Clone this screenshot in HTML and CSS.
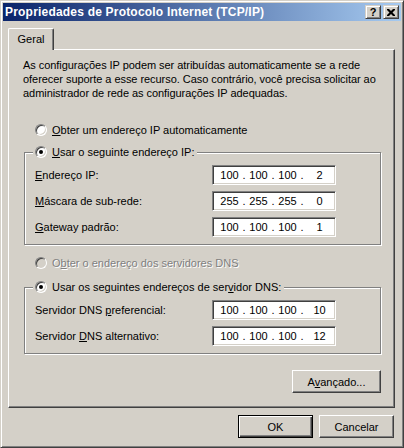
FILE: index.html
```html
<!DOCTYPE html>
<html lang="pt-BR">
<head>
  <meta charset="UTF-8" />
  <title>Propriedades de Protocolo Internet (TCP/IP)</title>
  <link rel="stylesheet" href="styles.css">
</head>
<body>
  <div class="window">
    <div class="titlebar">
      <span class="title">Propriedades de Protocolo Internet (TCP/IP)</span>
      <div class="caption-buttons">
        <button class="cap-btn help">?</button>
        <button class="cap-btn close" aria-label="Fechar">
          <svg width="8" height="7" viewBox="0 0 8 7"><path d="M0 0h2l2 2 2-2h2v1L5.5 3.5 8 6v1H6L4 5 2 7H0V6l2.5-2.5L0 1z" fill="#000"/></svg>
        </button>
      </div>
    </div>

    <div class="tabs">
      <div class="tab active">Geral</div>
    </div>

    <div class="tab-panel">
      <p class="intro">As configurações IP podem ser atribuídas automaticamente se a rede<br>oferecer suporte a esse recurso. Caso contrário, você precisa solicitar ao<br>administrador de rede as configurações IP adequadas.</p>

      <label class="radio-row auto-ip">
        <span class="radio"></span>
        <span><u>O</u>bter um endereço IP automaticamente</span>
      </label>

      <!-- IP manual -->
      <div class="group group-ip">
        <label class="radio-row legend">
          <span class="radio checked"></span>
          <span><u>U</u>sar o seguinte endereço IP:</span>
        </label>
        <div class="field-row">
          <span class="field-label"><u>E</u>ndereço IP:</span>
          <div class="ip-field"><span>100</span><i>.</i><span>100</span><i>.</i><span>100</span><i>.</i><span class="last">2</span></div>
        </div>
        <div class="field-row">
          <span class="field-label"><u>M</u>áscara de sub-rede:</span>
          <div class="ip-field"><span>255</span><i>.</i><span>255</span><i>.</i><span>255</span><i>.</i><span class="last">0</span></div>
        </div>
        <div class="field-row">
          <span class="field-label"><u>G</u>ateway padrão:</span>
          <div class="ip-field"><span>100</span><i>.</i><span>100</span><i>.</i><span>100</span><i>.</i><span class="last">1</span></div>
        </div>
      </div>

      <label class="radio-row auto-dns disabled">
        <span class="radio"></span>
        <span>O<u>b</u>ter o endereço dos servidores DNS</span>
      </label>

      <!-- DNS manual -->
      <div class="group group-dns">
        <label class="radio-row legend">
          <span class="radio checked"></span>
          <span>Usar os seguintes endereços de ser<u>v</u>idor DNS:</span>
        </label>
        <div class="field-row">
          <span class="field-label">Servidor DNS <u>p</u>referencial:</span>
          <div class="ip-field"><span>100</span><i>.</i><span>100</span><i>.</i><span>100</span><i>.</i><span class="last">10</span></div>
        </div>
        <div class="field-row">
          <span class="field-label">Servidor <u>D</u>NS alternativo:</span>
          <div class="ip-field"><span>100</span><i>.</i><span>100</span><i>.</i><span>100</span><i>.</i><span class="last">12</span></div>
        </div>
      </div>

      <div class="panel-actions">
        <button class="btn">A<u>v</u>ançado...</button>
      </div>
    </div>

    <div class="dialog-actions">
      <button class="btn default">OK</button>
      <button class="btn">Cancelar</button>
    </div>
  </div>
</body>
</html>
```

FILE: styles.css
```css
:root {
  --face: #d4d0c8;
  --shadow: #808080;
  --dark: #404040;
  --light: #fff;
}
* { box-sizing: border-box; }
body {
  margin: 0;
  background: var(--face);
  font-family: "Liberation Sans", Arial, sans-serif;
  font-size: 11px;
  color: #000;
}
u { text-decoration: underline; text-underline-offset: 1px; }

.window {
  width: 404px;
  height: 448px;
  background: var(--face);
  border: 1px solid;
  border-color: var(--face) var(--dark) var(--dark) var(--face);
  box-shadow: inset 1px 1px var(--light), inset -1px -1px var(--shadow);
  padding: 2px;
  display: flex;
  flex-direction: column;
}

/* title bar */
.titlebar {
  height: 18px;
  background: linear-gradient(to right, #0a246a, #a6caf0);
  display: flex;
  align-items: center;
  justify-content: space-between;
  padding: 0 2px 0 2px;
}
.title {
  color: #fff;
  font-weight: 700;
  font-size: 12px;
  letter-spacing: 0.2px;
}
.caption-buttons {
  display: flex;
  gap: 2px;
}
.cap-btn {
  width: 16px;
  height: 14px;
  padding: 0;
  background: var(--face);
  border: 1px solid;
  border-color: var(--face) var(--dark) var(--dark) var(--face);
  box-shadow: inset 1px 1px var(--light), inset -1px -1px var(--shadow);
  font: 700 11px "Liberation Sans", Arial, sans-serif;
  color: #000;
  display: flex;
  align-items: center;
  justify-content: center;
  line-height: 1;
}
.cap-btn svg { display: block; }

/* tabs */
.tabs {
  display: flex;
  height: 21px;
  margin: 7px 6px 0 5px;
}
.tab {
  position: relative;
  z-index: 1;
  width: 46px;
  height: 22px;
  padding-top: 4px;
  text-align: center;
  background: var(--face);
  border-top: 1px solid var(--light);
  border-left: 1px solid var(--light);
  border-right: 1px solid var(--dark);
  border-radius: 2px 2px 0 0;
  box-shadow: inset -1px 0 var(--shadow);
}

.tab-panel {
  height: 359px;
  margin: 0 6px 0 5px;
  padding: 8px 14px 0 14px;
  border: 1px solid;
  border-color: var(--light) var(--dark) var(--dark) var(--light);
  box-shadow: inset -1px -1px var(--shadow);
  display: flex;
  flex-direction: column;
}
.intro {
  margin: 0;
  line-height: 14px;
  letter-spacing: -0.05px;
}

/* radios */
.radio-row {
  display: flex;
  align-items: center;
  gap: 5px;
  height: 14px;
  align-self: flex-start;
}
.radio {
  width: 12px;
  height: 12px;
  border-radius: 50%;
  border: 1px solid;
  border-color: var(--shadow) var(--light) var(--light) var(--shadow);
  background: #fff;
  box-shadow: inset 1px 1px var(--dark), inset -1px -1px var(--face);
  display: flex;
  align-items: center;
  justify-content: center;
  flex: none;
}
.radio.checked::after {
  content: "";
  width: 4px;
  height: 4px;
  border-radius: 50%;
  background: #000;
}
.disabled { color: var(--shadow); }
.disabled > span:last-child { text-shadow: 1px 1px var(--light); }
.disabled .radio { background: var(--face); }

.auto-ip { margin: 23px 0 0 12px; }
.auto-dns { margin: 11px 0 0 12px; }

/* group boxes */
.group {
  margin-left: 1px;
  width: 357px;
  border: 1px solid var(--shadow);
  box-shadow: inset 1px 1px var(--light), 1px 1px var(--light);
  padding: 0 0 7px 10px;
  display: flex;
  flex-direction: column;
  gap: 6px;
}
.group-ip { margin-top: 15px; }
.group-dns { margin-top: 17px; }
.legend {
  margin: -8px 0 0 -2px;
  padding: 0 3px 0 2px;
  background: var(--face);
}

.field-row {
  display: flex;
  align-items: center;
  height: 20px;
}
.field-label { width: 177px; }
.ip-field {
  width: 124px;
  height: 20px;
  background: #fff;
  border: 1px solid;
  border-color: var(--shadow) var(--light) var(--light) var(--shadow);
  box-shadow: inset 1px 1px var(--dark), inset -1px -1px var(--face);
  padding-left: 5px;
  display: flex;
  align-items: center;
}
.ip-field span { width: 23px; text-align: center; }
.ip-field span.last { width: 29px; }
.ip-field i { width: 6px; font-style: normal; text-align: center; }

/* buttons */
.btn {
  width: 75px;
  height: 23px;
  padding: 0;
  background: var(--face);
  border: 1px solid;
  border-color: var(--light) var(--dark) var(--dark) var(--light);
  box-shadow: inset -1px -1px var(--shadow);
  font: 11px "Liberation Sans", Arial, sans-serif;
  color: #000;
}
.btn.default {
  border: 1px solid #000;
  box-shadow: inset 1px 1px var(--light), inset -1px -1px var(--dark), inset -2px -2px var(--shadow);
}
.panel-actions {
  display: flex;
  justify-content: flex-end;
  width: 358px;
  margin-top: 16px;
}
.panel-actions .btn { width: 89px; }
.dialog-actions {
  display: flex;
  justify-content: flex-end;
  gap: 6px;
  margin: 7px 7px 0 0;
}
```
